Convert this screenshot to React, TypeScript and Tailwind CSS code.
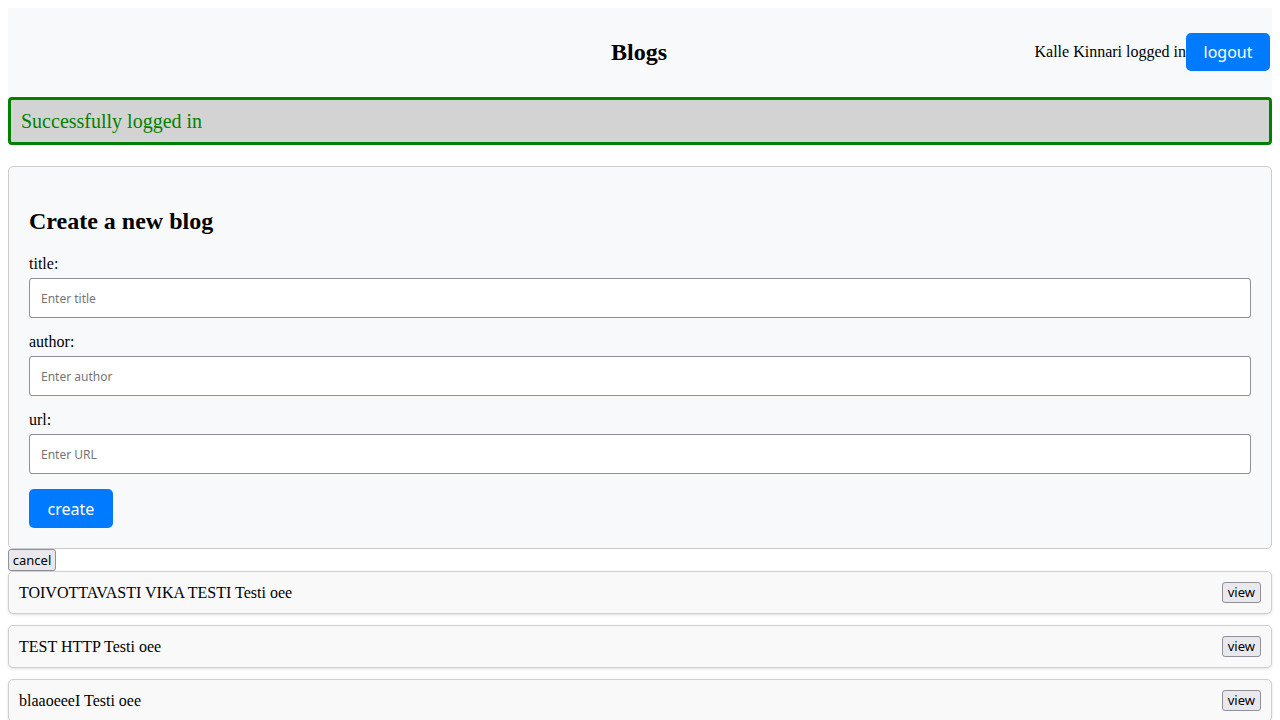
import React from "react";

const serif = { fontFamily: '"Liberation Serif", "Times New Roman", serif' };

function Field({ label, placeholder }: { label: string; placeholder: string }) {
  return (
    <div className="mb-[15px]">
      <div className="text-[16px] leading-[18px] text-black">{label}</div>
      <input
        placeholder={placeholder}
        className="mt-[5px] block w-full h-[40px] bg-white border border-[#8f8f9d] rounded-[3px] px-[11px] text-[12px] text-black placeholder:text-[#757575] outline-none font-['Noto_Sans',sans-serif]"
      />
    </div>
  );
}

function BlogItem({ text }: { text: string }) {
  return (
    <div className="mb-[11px] h-[43px] flex items-center justify-between bg-[#f9f9f9] border border-[#cfcfcf] rounded-[5px] shadow-[0_1px_3px_rgba(0,0,0,0.12)] px-[10px]">
      <span className="text-[16px] leading-[18px] text-black">{text}</span>
      <button className="h-[21px] px-[5px] bg-[#e9e9ed] border border-[#8f8f9d] rounded-[3px] text-[13px] leading-[17px] text-black font-['Noto_Sans',sans-serif]">
        view
      </button>
    </div>
  );
}

export default function App() {
  return (
    <div className="bg-white min-h-[720px] p-[8px]" style={serif}>
      <header className="grid grid-cols-[1fr_auto_1fr] items-center h-[88px] bg-[#f8f9fa] pr-[2px]">
        <div />
        <h1 className="text-[24px] font-bold leading-[28px] text-black">Blogs</h1>
        <div className="flex items-center justify-end">
          <span className="text-[16px] text-black">Kalle Kinnari logged in</span>
          <button className="w-[84px] h-[38px] bg-[#007bff] text-white rounded-[5px] text-[16px] font-['Noto_Sans',sans-serif]">
            logout
          </button>
        </div>
      </header>
      <div className="mt-[1px] mb-[21px] h-[48px] flex items-center border-[3px] border-[#008000] rounded-[4px] bg-[#d3d3d3] px-[10px]">
        <span className="text-[20px] text-[#008000]">Successfully logged in</span>
      </div>
      <div className="bg-[#f8f9fa] border border-[#cccccc] rounded-[5px] px-[20px] pt-[40px] pb-[20px]">
        <h2 className="text-[24px] font-bold leading-[28px] text-black mb-[20px]">Create a new blog</h2>
        <Field label="title:" placeholder="Enter title" />
        <Field label="author:" placeholder="Enter author" />
        <Field label="url:" placeholder="Enter URL" />
        <button className="w-[84px] h-[39px] bg-[#007bff] text-white rounded-[5px] text-[16px] font-['Noto_Sans',sans-serif]">
          create
        </button>
      </div>
      <button className="block w-[48px] h-[22px] bg-[#e9e9ed] border border-[#8f8f9d] rounded-[3px] text-[13px] leading-[17px] text-black font-['Noto_Sans',sans-serif]">
        cancel
      </button>
      <BlogItem text="TOIVOTTAVASTI VIKA TESTI Testi oee" />
      <BlogItem text="TEST HTTP Testi oee" />
      <BlogItem text="blaaoeeeI Testi oee" />
    </div>
  );
}
